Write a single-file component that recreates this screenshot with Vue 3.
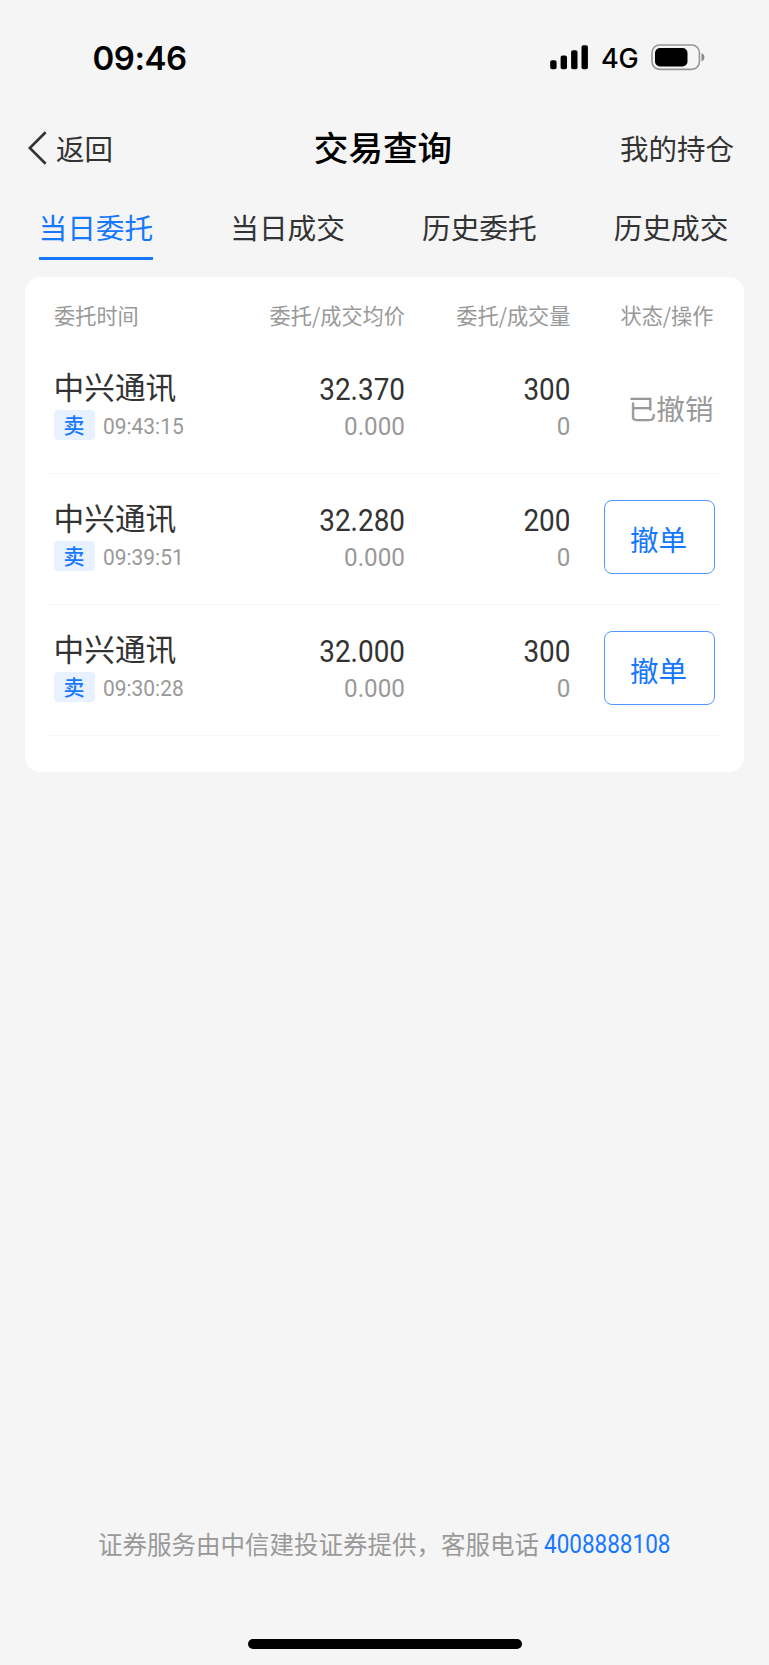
<template>
  <div class="page">
    <div class="status-bar">
      <span class="clock">09:46</span>
      <div class="status-icons">
        <svg class="signal" width="39" height="25" viewBox="0 0 39 25">
          <rect x="0.2" y="15.3" width="6.4" height="8.9" rx="1.9" />
          <rect x="10.6" y="10.5" width="6.4" height="13.7" rx="1.9" />
          <rect x="21.1" y="5.3" width="6.4" height="18.9" rx="1.9" />
          <rect x="31.5" y="0.2" width="6.4" height="24" rx="1.9" />
        </svg>
        <span class="network">4G</span>
        <svg class="battery" width="55" height="27" viewBox="0 0 55 27">
          <rect x="1" y="1" width="47.4" height="24.4" rx="7.6" fill="none" stroke="#979797" stroke-width="1.6" />
          <rect x="4" y="4" width="32.5" height="18.4" rx="5" />
          <path d="M50.5 9.2v8a4.2 4.2 0 0 0 0-8z" fill="#8c8c8c" />
        </svg>
      </div>
    </div>

    <header class="nav-bar">
      <button type="button" class="nav-back">
        <svg width="19" height="34" viewBox="0 0 19 34">
          <path d="M17.6 1.2L1.8 17l15.8 15.8" fill="none" stroke="#333" stroke-width="2.7" />
        </svg>
        <span>返回</span>
      </button>
      <h1 class="nav-title">交易查询</h1>
      <button type="button" class="nav-link">我的持仓</button>
    </header>

    <nav class="tabs">
      <button
        v-for="(tab, index) in tabs"
        :key="tab"
        type="button"
        class="tab"
        :class="{ 'tab-active': index === activeTab }"
        @click="activeTab = index"
      >
        {{ tab }}
      </button>
    </nav>

    <main class="card">
      <div class="row head">
        <span>委托时间</span>
        <span>委托/成交均价</span>
        <span>委托/成交量</span>
        <span>状态/操作</span>
      </div>
      <div v-for="order in orders" :key="order.time" class="row order">
        <div class="stock">
          <div class="name">{{ order.name }}</div>
          <div class="meta">
            <span class="side">卖</span>
            <span class="time">{{ order.time }}</span>
          </div>
        </div>
        <div class="numbers">
          <span class="value">{{ order.price }}</span>
          <span class="sub">{{ order.dealPrice }}</span>
        </div>
        <div class="numbers">
          <span class="value">{{ order.amount }}</span>
          <span class="sub">{{ order.dealAmount }}</span>
        </div>
        <div class="action">
          <button v-if="order.cancelable" type="button" class="cancel-btn">撤单</button>
          <span v-else class="state">已撤销</span>
        </div>
      </div>
    </main>

    <footer class="footer">
      <span class="notice">证券服务由中信建投证券提供，客服电话</span>
      <a class="phone">4008888108</a>
    </footer>
    <div class="home-indicator"></div>
  </div>
</template>

<script setup>
import { ref } from "vue";

const tabs = ["当日委托", "当日成交", "历史委托", "历史成交"];
const activeTab = ref(0);

const orders = [
  {
    name: "中兴通讯",
    time: "09:43:15",
    price: "32.370",
    dealPrice: "0.000",
    amount: "300",
    dealAmount: "0",
    cancelable: false,
  },
  {
    name: "中兴通讯",
    time: "09:39:51",
    price: "32.280",
    dealPrice: "0.000",
    amount: "200",
    dealAmount: "0",
    cancelable: true,
  },
  {
    name: "中兴通讯",
    time: "09:30:28",
    price: "32.000",
    dealPrice: "0.000",
    amount: "300",
    dealAmount: "0",
    cancelable: true,
  },
];
</script>

<style>
body {
  margin: 0;
  background: #f5f5f5;
}
</style>

<style scoped>
.page {
  display: flex;
  flex-direction: column;
  width: 769px;
  height: 1665px;
  overflow: hidden;
  background: #f5f5f5;
  color: #333;
  font-family: "Noto Sans CJK SC", sans-serif;
}

button {
  margin: 0;
  padding: 0;
  border: none;
  background: none;
  color: inherit;
  font: inherit;
  cursor: pointer;
}

.status-bar {
  display: flex;
  align-items: center;
  justify-content: space-between;
  height: 115px;
  padding: 0 63.5px 0 92.5px;
  box-sizing: border-box;
  color: #000;
  font-family: Inter, sans-serif;
}

.clock {
  font-size: 33px;
  font-weight: 600;
  letter-spacing: -0.5px;
}

.status-icons {
  display: flex;
  align-items: center;
}

.network {
  margin: 2px 12px 0 11px;
  font-size: 27px;
  font-weight: 500;
  line-height: 30px;
  letter-spacing: -0.2px;
}

.signal {
  margin-right: 0.5px;
}

.nav-bar {
  display: grid;
  grid-template-columns: 1fr auto 1fr;
  align-items: center;
  height: 66px;
  padding: 0 35px 0 28px;
  font-size: 28.5px;
  line-height: 40px;
}

.nav-back {
  display: flex;
  align-items: center;
  gap: 9px;
}

.nav-back span {
  margin-top: -1px;
}

.nav-title {
  margin: -4px -4px 0 0;
  color: #000;
  font-size: 34.6px;
  font-weight: 500;
  line-height: 48px;
}

.nav-link {
  justify-self: end;
  margin-top: -1px;
}

.tabs {
  display: flex;
  justify-content: space-between;
  height: 79px;
  margin-bottom: 17px;
  padding: 0 40.5px 0 38.5px;
}

.tab {
  box-sizing: border-box;
  padding-top: 15px;
  border-bottom: 3px solid transparent;
  font-size: 28.7px;
  line-height: 40px;
}

.tab-active {
  border-color: #1677ff;
  color: #1677ff;
}

.card {
  box-sizing: border-box;
  width: 718.5px;
  height: 494.5px;
  margin: 0 25px;
  padding: 0 24px;
  border-radius: 15px;
  background: #fff;
}

.row {
  display: grid;
  grid-template-columns: 179px 172px 165.5px 143px;
  padding: 0 3px 0 5px;
}

.head {
  height: 66px;
  color: #999;
  font-size: 21.2px;
  line-height: 76px;
  text-align: right;
  white-space: nowrap;
}

.head span:first-child {
  text-align: left;
}

.order {
  box-sizing: border-box;
  height: 131px;
  border-bottom: 1px solid #f6f6f6;
}

.name {
  margin: 22px 0 0 -0.5px;
  font-size: 30.7px;
  line-height: 42px;
}

.meta {
  display: flex;
  align-items: center;
  gap: 8px;
  margin: 2px 0 0 -0.5px;
}

.side {
  width: 41px;
  height: 30px;
  border-radius: 4px;
  background: #e7f1ff;
  color: #1677ff;
  font-size: 21px;
  font-weight: 500;
  line-height: 29px;
  text-align: center;
}

.time {
  margin-top: 2px;
  color: #999;
  font-family: Roboto, sans-serif;
  font-size: 22.5px;
  line-height: 30px;
  transform: scaleX(0.93);
  transform-origin: left;
}

.numbers {
  display: flex;
  flex-direction: column;
  padding-top: 29px;
  font-family: Roboto, sans-serif;
  text-align: right;
  transform: scaleX(0.915);
  transform-origin: right;
}

.value {
  font-size: 30.5px;
  line-height: 36px;
}

.sub {
  margin-top: 1px;
  color: #999;
  font-size: 26.5px;
  line-height: 34px;
}

.action {
  display: flex;
  align-items: flex-start;
  justify-content: flex-end;
}

.state {
  margin-top: 45px;
  color: #999;
  font-size: 28.6px;
  line-height: 40px;
}

.cancel-btn {
  box-sizing: border-box;
  width: 111px;
  height: 74px;
  margin: 26px -1px 0 0;
  padding: 2px 1px 0 0;
  border: 1px solid #4f98ff;
  border-radius: 8px;
  color: #1677ff;
  font-size: 28.6px;
}

.footer {
  display: flex;
  align-items: center;
  gap: 5px;
  height: 40px;
  margin-top: auto;
  padding-left: 98px;
  color: #999;
  font-size: 24.5px;
  line-height: 40px;
  white-space: nowrap;
}

.notice {
  margin-top: -3px;
}

.phone {
  color: #1677ff;
  font-family: Roboto, sans-serif;
  font-size: 25px;
  transform: scaleX(0.9);
  transform-origin: left;
}

.home-indicator {
  flex: none;
  width: 274px;
  height: 10px;
  margin: 74px 0 16px 247.5px;
  border-radius: 5px;
  background: #000;
}
</style>
